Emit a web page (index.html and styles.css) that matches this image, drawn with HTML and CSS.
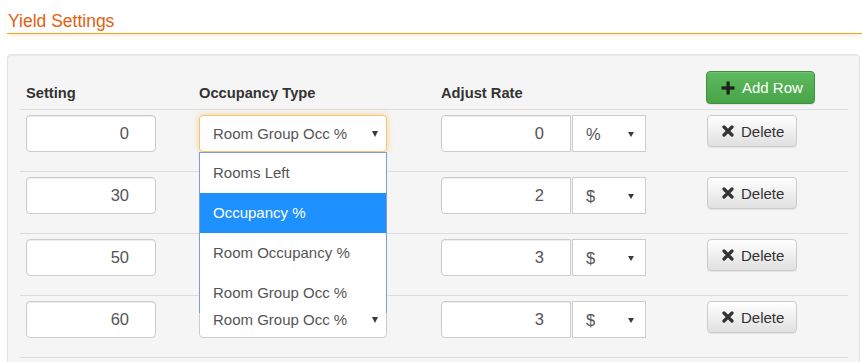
FILE: index.html
```html
<!DOCTYPE html>
<html lang="en">
<head>
    <meta charset="UTF-8">
    <meta name="viewport" content="width=device-width, initial-scale=1.0">
    <title>Yield Settings</title>
    <link rel="stylesheet" href="styles.css">
</head>
<body>
    <div class="page">
        <h2 class="title">Yield Settings</h2>

        <div class="well">
            <!-- Header -->
            <div class="row head">
                <div class="cell th">Setting</div>
                <div class="cell th">Occupancy Type</div>
                <div class="cell th">Adjust Rate</div>
                <div class="cell">
                    <button class="btn btn-add">
                        <svg class="ico" width="14" height="14" viewBox="0 0 14 14"><rect x="5.5" y="0.5" width="3.2" height="13" fill="#1d1d1d"/><rect x="0.5" y="5.4" width="13" height="3.2" fill="#1d1d1d"/></svg>
                        Add Row
                    </button>
                </div>
            </div>

            <!-- Row 1 -->
            <div class="row">
                <div class="cell"><input type="text" class="num" value="0"></div>
                <div class="cell">
                    <div class="sel sel-type is-open">
                        <select><option>Room Group Occ %</option></select>
                        <ul class="sel-list">
                            <li>Rooms Left</li>
                            <li class="active">Occupancy %</li>
                            <li>Room Occupancy %</li>
                            <li>Room Group Occ %</li>
                        </ul>
                    </div>
                </div>
                <div class="cell">
                    <div class="input-group">
                        <input type="text" class="num num-rate" value="0">
                        <div class="sel sel-unit"><select><option>%</option></select></div>
                    </div>
                </div>
                <div class="cell">
                    <button class="btn btn-del">
                        <svg class="ico" width="12" height="12" viewBox="0 0 12 12"><path d="M2 2 L10 10 M10 2 L2 10" stroke="#333" stroke-width="3.2" stroke-linecap="round"/></svg>
                        Delete
                    </button>
                </div>
            </div>

            <!-- Row 2 -->
            <div class="row">
                <div class="cell"><input type="text" class="num" value="30"></div>
                <div class="cell">
                    <div class="sel sel-type"><select><option>Occupancy %</option></select></div>
                </div>
                <div class="cell">
                    <div class="input-group">
                        <input type="text" class="num num-rate" value="2">
                        <div class="sel sel-unit"><select><option>$</option></select></div>
                    </div>
                </div>
                <div class="cell">
                    <button class="btn btn-del">
                        <svg class="ico" width="12" height="12" viewBox="0 0 12 12"><path d="M2 2 L10 10 M10 2 L2 10" stroke="#333" stroke-width="3.2" stroke-linecap="round"/></svg>
                        Delete
                    </button>
                </div>
            </div>

            <!-- Row 3 -->
            <div class="row">
                <div class="cell"><input type="text" class="num" value="50"></div>
                <div class="cell">
                    <div class="sel sel-type"><select><option>Occupancy %</option></select></div>
                </div>
                <div class="cell">
                    <div class="input-group">
                        <input type="text" class="num num-rate" value="3">
                        <div class="sel sel-unit"><select><option>$</option></select></div>
                    </div>
                </div>
                <div class="cell">
                    <button class="btn btn-del">
                        <svg class="ico" width="12" height="12" viewBox="0 0 12 12"><path d="M2 2 L10 10 M10 2 L2 10" stroke="#333" stroke-width="3.2" stroke-linecap="round"/></svg>
                        Delete
                    </button>
                </div>
            </div>

            <!-- Row 4 -->
            <div class="row">
                <div class="cell"><input type="text" class="num" value="60"></div>
                <div class="cell">
                    <div class="sel sel-type"><select><option>Room Group Occ %</option></select></div>
                </div>
                <div class="cell">
                    <div class="input-group">
                        <input type="text" class="num num-rate" value="3">
                        <div class="sel sel-unit"><select><option>$</option></select></div>
                    </div>
                </div>
                <div class="cell">
                    <button class="btn btn-del">
                        <svg class="ico" width="12" height="12" viewBox="0 0 12 12"><path d="M2 2 L10 10 M10 2 L2 10" stroke="#333" stroke-width="3.2" stroke-linecap="round"/></svg>
                        Delete
                    </button>
                </div>
            </div>
        </div>
    </div>
</body>
</html>
```

FILE: styles.css
```css
html, body {
    margin: 0;
    padding: 0;
    overflow: hidden;
}

body {
    font-family: 'Liberation Sans', Arial, sans-serif;
    font-size: 15px;
    color: #333;
    background: #fff;
}

.page {
    padding: 0 2px 0 7px;
}

.title {
    margin: 0 -2px 0 0;
    padding: 9px 0 0 1px;
    font-size: 17.5px;
    line-height: 24px;
    font-weight: normal;
    color: #e4600f;
    border-bottom: 1px solid #f7a21b;
    box-shadow: 0 3px 4px -1px rgba(247, 162, 27, 0.18);
}

.well {
    margin-top: 20px;
    padding: 12px 11px 12px 12px;
    background-color: #f5f5f5;
    border: 1px solid #e3e3e3;
    border-radius: 4px;
    box-shadow: inset 0 1px 1px rgba(0, 0, 0, 0.05);
}

.row {
    display: grid;
    grid-template-columns: 173px 242px 265px 1fr;
    align-items: start;
    padding: 5px 0 19px;
    border-bottom: 1px solid #ddd;
}

.row.head {
    align-items: end;
    padding: 4px 0 5px;
}

.cell {
    padding: 0 6px;
}

.th {
    font-size: 14.7px;
    font-weight: bold;
    line-height: 20px;
    padding-bottom: 1px;
}

/* inputs */
input.num {
    box-sizing: border-box;
    width: 130px;
    height: 37px;
    margin: 0;
    padding: 0 26px 0 6px;
    font-family: inherit;
    font-size: 16.5px;
    color: #555;
    text-align: right;
    background: #fff;
    border: 1px solid #ccc;
    border-radius: 4px;
    box-shadow: inset 0 1px 1px rgba(0, 0, 0, 0.075);
    outline: none;
}

.input-group {
    display: flex;
    gap: 1px;
}

input.num-rate {
    border-radius: 4px 0 0 4px;
}

/* selects */
.sel {
    position: relative;
    box-sizing: border-box;
    height: 37px;
    background: #fff;
    border: 1px solid #ccc;
    border-radius: 4px;
}

.sel select {
    appearance: none;
    -webkit-appearance: none;
    width: 100%;
    height: 100%;
    margin: 0;
    padding: 0 0 0 13px;
    font-family: inherit;
    font-size: 15px;
    color: #555;
    background: transparent;
    border: none;
    outline: none;
}

.sel::after {
    content: "";
    position: absolute;
    top: 50%;
    border-top: 6px solid #3a3a3a;
    border-left: 3.5px solid transparent;
    border-right: 3.5px solid transparent;
    margin-top: -3px;
}

.sel-type {
    width: 188px;
}

.sel-type::after {
    right: 8px;
}

.sel-unit {
    width: 74px;
    border-radius: 0;
}

.sel-unit select {
    font-size: 16.5px;
}

.sel-unit::after {
    right: 11px;
    border-top-width: 5px;
    border-left-width: 3px;
    border-right-width: 3px;
    margin-top: -2px;
}

.sel.is-open {
    border-color: #f8c46f;
    box-shadow: 0 0 6px rgba(245, 166, 35, 0.45);
}

.sel-list {
    position: absolute;
    top: calc(100% + 1px);
    left: -1px;
    z-index: 10;
    box-sizing: border-box;
    width: 188px;
    margin: 0;
    padding: 0;
    list-style: none;
    background: #fff;
    border: 1px solid #7a9fd6;
    border-bottom: none;
}

.sel-list li {
    height: 40px;
    line-height: 40px;
    padding-left: 13px;
    color: #555;
}

.sel-list li.active {
    background-color: #1e90ff;
    color: #fff;
}

/* buttons */
.btn {
    display: inline-flex;
    align-items: center;
    box-sizing: border-box;
    margin: 0;
    font-family: inherit;
    font-size: 15px;
    border-radius: 4px;
    cursor: pointer;
}

.btn .ico {
    margin-right: 7px;
}

.btn-add {
    width: 109px;
    height: 33px;
    padding: 0 0 0 14px;
    color: #fff;
    background: linear-gradient(to bottom, #5fba5f, #47a447);
    border: 1px solid #3e8f3e;
    box-shadow: inset 0 1px 0 rgba(255, 255, 255, 0.15), 0 1px 1px rgba(0, 0, 0, 0.075);
}

.btn-del {
    width: 90px;
    height: 32px;
    margin-left: 1px;
    padding: 0 0 0 14px;
    color: #333;
    background: linear-gradient(to bottom, #fff, #e0e0e0);
    border: 1px solid #ccc;
    box-shadow: inset 0 1px 0 rgba(255, 255, 255, 0.15), 0 1px 1px rgba(0, 0, 0, 0.075);
}
```
